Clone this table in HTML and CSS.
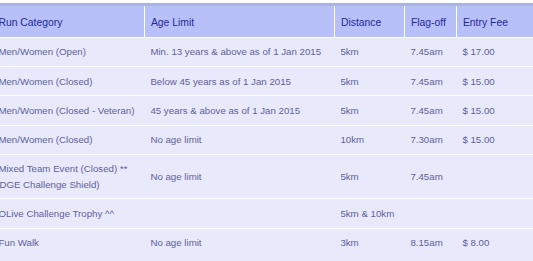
FILE: index.html
```html
<!DOCTYPE html>
<html>
<head>
<meta charset="utf-8">
<link rel="stylesheet" href="styles.css">
</head>
<body>
<table class="fees">
  <colgroup>
    <col class="c-cat">
    <col class="c-age">
    <col class="c-dist">
    <col class="c-flag">
    <col class="c-fee">
  </colgroup>
  <thead>
    <tr>
      <th>Run Category</th>
      <th>Age Limit</th>
      <th>Distance</th>
      <th>Flag-off</th>
      <th>Entry Fee</th>
    </tr>
  </thead>
  <tbody>
    <tr>
      <td>Men/Women (Open)</td>
      <td>Min. 13 years &amp; above as of 1 Jan 2015</td>
      <td>5km</td>
      <td>7.45am</td>
      <td>$ 17.00</td>
    </tr>
    <tr>
      <td>Men/Women (Closed)</td>
      <td>Below 45 years as of 1 Jan 2015</td>
      <td>5km</td>
      <td>7.45am</td>
      <td>$ 15.00</td>
    </tr>
    <tr>
      <td>Men/Women (Closed - Veteran)</td>
      <td>45 years &amp; above as of 1 Jan 2015</td>
      <td>5km</td>
      <td>7.45am</td>
      <td>$ 15.00</td>
    </tr>
    <tr>
      <td>Men/Women (Closed)</td>
      <td>No age limit</td>
      <td>10km</td>
      <td>7.30am</td>
      <td>$ 15.00</td>
    </tr>
    <tr>
      <td>Mixed Team Event (Closed) **<br><span class="cut">DGE Challenge Shield)</span></td>
      <td>No age limit</td>
      <td>5km</td>
      <td>7.45am</td>
      <td></td>
    </tr>
    <tr>
      <td>OLive Challenge Trophy ^^</td>
      <td></td>
      <td>5km &amp; 10km</td>
      <td></td>
      <td></td>
    </tr>
    <tr class="last">
      <td>Fun Walk</td>
      <td>No age limit</td>
      <td>3km</td>
      <td>8.15am</td>
      <td>$ 8.00</td>
    </tr>
  </tbody>
</table>
</body>
</html>
```

FILE: styles.css
```css
html, body {
  margin: 0;
  padding: 0;
  background: #ffffff;
  overflow: hidden;
}

body {
  padding-top: 3px;
  font-family: "Liberation Sans", Arial, sans-serif;
}

.fees {
  margin-left: -8px;
  width: 554px;
  table-layout: fixed;
  border-collapse: collapse;
  text-align: left;
}

.c-cat { width: 152px; }
.c-age { width: 190px; }
.c-dist { width: 70px; }
.c-flag { width: 52px; }
.c-fee { width: 90px; }

.fees th {
  font-size: 10.4px;
  font-weight: normal;
  line-height: 16px;
  padding: 8.5px 6.4px 6.5px;
  background: #b8c0f9;
  border-top: 3px solid #a9b1f4;
  border-bottom: 1px solid #ffffff;
  border-left: 1px solid #ffffff;
  color: #24289a;
  white-space: nowrap;
}

.fees th:first-child {
  border-left: none;
}

.fees td {
  font-size: 9.7px;
  line-height: 15.4px;
  padding: 6.4px 6.4px;
  background: #e8eafc;
  border-bottom: 1px solid #ffffff;
  color: #5f5e9a;
  vertical-align: middle;
  white-space: nowrap;
}

.fees td .cut {
  margin-left: 1px;
}

.fees tr.last td {
  padding-bottom: 12px;
  border-bottom: none;
}
```
